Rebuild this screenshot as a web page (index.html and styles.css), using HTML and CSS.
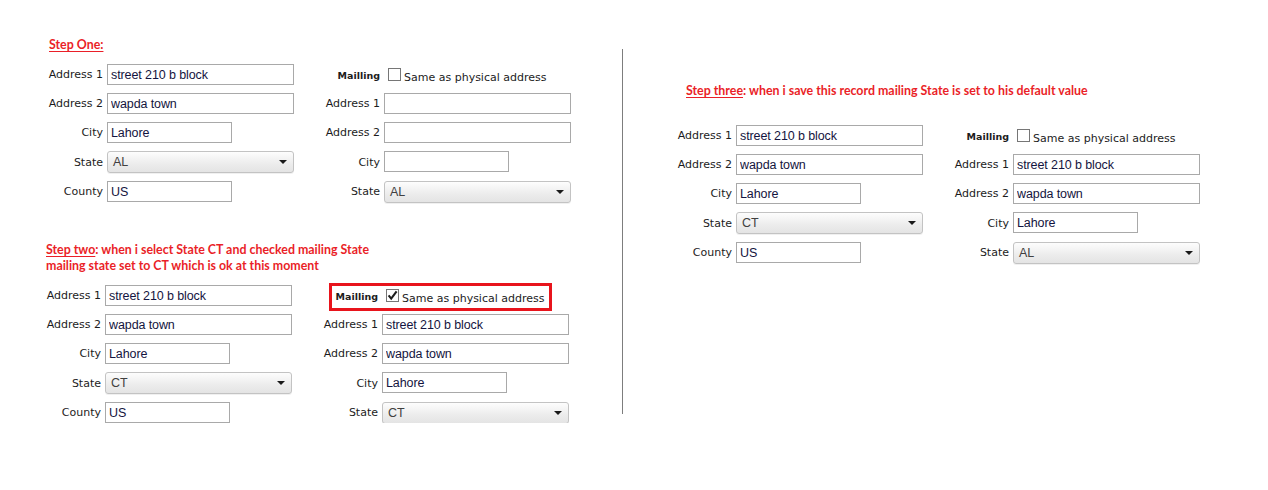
FILE: index.html
```html
<!DOCTYPE html>
<html>
<head>
<meta charset="utf-8">
<title>Mailing address</title>
<link rel="stylesheet" href="styles.css">
</head>
<body>
<div class="page">
  <div class="col-left">
    <section class="step step-one">
      <p class="note"><u>Step One: </u></p>
      <div class="form">
        <label class="lbl">Address 1</label><input class="text wide" type="text" value="street 210 b block">
        <label class="lbl strong">Mailling</label><div class="check"><span class="box"></span><span class="check-text">Same as physical address</span></div>

        <label class="lbl">Address 2</label><input class="text wide" type="text" value="wapda town">
        <label class="lbl">Address 1</label><input class="text wide" type="text" value="">

        <label class="lbl">City</label><input class="text short" type="text" value="Lahore">
        <label class="lbl">Address 2</label><input class="text wide" type="text" value="">

        <label class="lbl">State</label><div class="select"><span>AL</span></div>
        <label class="lbl">City</label><input class="text short" type="text" value="">

        <label class="lbl">County</label><input class="text short" type="text" value="US">
        <label class="lbl">State</label><div class="select"><span>AL</span></div>
      </div>
    </section>

    <section class="step step-two">
      <p class="note"><u>Step two</u>: when i select State CT and checked mailing State<br>mailing state set to CT which is ok at this moment</p>
      <div class="form">
        <label class="lbl">Address 1</label><input class="text wide" type="text" value="street 210 b block">
        <label class="lbl strong">Mailling</label><div class="check"><span class="box checked"><svg viewBox="0 0 13 13" width="13" height="13"><path d="M2.6 6.4 L5.2 9.6 L10.6 2.4" fill="none" stroke="#1e1e1e" stroke-width="2.1"/></svg></span><span class="check-text">Same as physical address</span></div>

        <label class="lbl">Address 2</label><input class="text wide" type="text" value="wapda town">
        <label class="lbl">Address 1</label><input class="text wide" type="text" value="street 210 b block">

        <label class="lbl">City</label><input class="text short" type="text" value="Lahore">
        <label class="lbl">Address 2</label><input class="text wide" type="text" value="wapda town">

        <label class="lbl">State</label><div class="select"><span>CT</span></div>
        <label class="lbl">City</label><input class="text short" type="text" value="Lahore">

        <label class="lbl">County</label><input class="text short" type="text" value="US">
        <label class="lbl">State</label><div class="select"><span>CT</span></div>

        <div class="highlight"></div>
      </div>
    </section>
  </div>

  <div class="divider"></div>

  <div class="col-right">
    <section class="step step-three">
      <p class="note"><u>Step three</u>: when i save this record mailing State is set to his default value</p>
      <div class="form">
        <label class="lbl">Address 1</label><input class="text wide" type="text" value="street 210 b block">
        <label class="lbl strong">Mailling</label><div class="check"><span class="box"></span><span class="check-text">Same as physical address</span></div>

        <label class="lbl">Address 2</label><input class="text wide" type="text" value="wapda town">
        <label class="lbl">Address 1</label><input class="text wide" type="text" value="street 210 b block">

        <label class="lbl">City</label><input class="text short" type="text" value="Lahore">
        <label class="lbl">Address 2</label><input class="text wide" type="text" value="wapda town">

        <label class="lbl">State</label><div class="select"><span>CT</span></div>
        <label class="lbl">City</label><input class="text short" type="text" value="Lahore">

        <label class="lbl">County</label><input class="text short" type="text" value="US">
        <label class="lbl">State</label><div class="select"><span>AL</span></div>
      </div>
    </section>
  </div>
</div>
</body>
</html>
```

FILE: styles.css
```css
html, body {
  margin: 0;
  padding: 0;
  background: #ffffff;
}

body {
  font-family: "DejaVu Sans", Verdana, sans-serif;
  color: #1c1c1c;
}

.page {
  display: flex;
  align-items: flex-start;
  padding: 37px 0 0 46px;
}

.col-left {
  width: 576px;
  flex: none;
}

.divider {
  flex: none;
  width: 1px;
  height: 365px;
  margin-top: 12px;
  background: #7d7d7d;
}

.col-right {
  flex: none;
  margin-left: 55px;
  margin-top: 46px;
}

.note {
  margin: 0 0 11px 0;
  font-family: "Lato", "Open Sans", sans-serif;
  font-weight: 700;
  font-size: 12.4px;
  line-height: 16px;
  color: #ea1f28;
  white-space: nowrap;
}

.note u {
  text-decoration-thickness: 1px;
  text-underline-offset: 2px;
}

.step-one .note {
  margin-left: 3px;
}

.step-one .form {
  margin-left: 3px;
}

.step-two {
  margin-top: 40px;
}

.step-two .form {
  margin-left: 1px;
}

.step-three .note {
  margin-left: 8px;
  margin-bottom: 26px;
}

.form {
  position: relative;
  display: grid;
  grid-template-columns: 58px 187px 90px 187px;
  grid-template-rows: 21px 21px 21px 22px 21px;
  row-gap: 8px;
}

.lbl {
  align-self: center;
  justify-self: end;
  padding-right: 4px;
  font-size: 11px;
  line-height: 13px;
  white-space: nowrap;
  color: #1c1c1c;
}

.lbl.strong {
  font-weight: 700;
  font-size: 9.5px;
  padding-top: 1px;
}

.text {
  box-sizing: border-box;
  height: 21px;
  margin: 0;
  padding: 0 2px 0 3px;
  border: 1px solid #a9a9a9;
  border-radius: 0;
  background: #ffffff;
  font-family: "Liberation Sans", Arial, sans-serif;
  font-size: 12.5px;
  letter-spacing: -0.1px;
  color: #141440;
  outline: none;
}

.text.wide {
  width: 187px;
}

.text.short {
  width: 125px;
}

.select {
  box-sizing: border-box;
  width: 187px;
  height: 22px;
  display: flex;
  align-items: center;
  justify-content: space-between;
  padding: 0 6px 0 5px;
  border: 1px solid #c3c3c3;
  border-radius: 3px;
  background: linear-gradient(#fdfdfd, #ececec 60%, #e4e4e4);
  box-shadow: 0 1px 0 rgba(0, 0, 0, 0.06);
  font-family: "Liberation Sans", Arial, sans-serif;
  font-size: 12.5px;
  letter-spacing: -0.1px;
  color: #404040;
}

.select::after {
  content: "";
  width: 0;
  height: 0;
  border-left: 4px solid transparent;
  border-right: 4px solid transparent;
  border-top: 4px solid #1a1a1a;
}

.check {
  display: flex;
  align-items: flex-start;
  padding-top: 4px;
}

.box {
  box-sizing: border-box;
  flex: none;
  width: 13px;
  height: 13px;
  margin-left: 4px;
  border: 1px solid #767676;
  background: #ffffff;
  position: relative;
}

.box svg {
  position: absolute;
  left: -1px;
  top: -1px;
}

.check-text {
  margin-left: 3px;
  padding-top: 3px;
  font-size: 11px;
  line-height: 13px;
  white-space: nowrap;
  color: #1c1c1c;
}

.highlight {
  position: absolute;
  left: 282px;
  top: -2px;
  width: 223px;
  height: 28px;
  box-sizing: border-box;
  border: 3px solid #e8141c;
  pointer-events: none;
}
```
